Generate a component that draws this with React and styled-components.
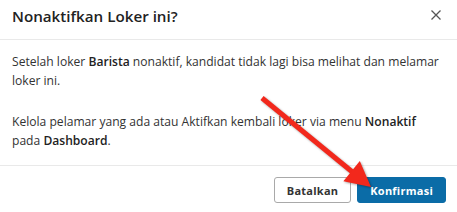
import React from "react";
import styled, { createGlobalStyle } from "styled-components";

const GlobalStyle = createGlobalStyle`
  html, body {
    margin: 0;
    padding: 0;
    background: #ffffff;
  }
  body {
    font-family: "Open Sans", "Noto Sans", Arial, sans-serif;
    color: #333333;
    -webkit-font-smoothing: antialiased;
  }
`;

const Dialog = styled.div`
  position: relative;
  width: 457px;
  background: #fff;
`;

const Header = styled.div`
  box-sizing: border-box;
  height: 40px;
  padding: 5px 12px 0 12px;
  display: flex;
  align-items: flex-start;
  justify-content: space-between;
  border-bottom: 1px solid #e9e9e9;
`;

const Title = styled.h4`
  margin: 0;
  font-size: 15.2px;
  line-height: 22px;
  font-weight: 600;
  color: #222;
`;

const Close = styled.button`
  border: 0;
  background: none;
  padding: 0;
  margin-right: 4px;
  height: 20px;
  display: flex;
  align-items: center;
  color: #555;
  cursor: pointer;
`;

const Body = styled.div`
  padding: 13px 14px 15px 12px;
  font-size: 12.1px;
  line-height: 18.57px;

  p {
    margin: 0;
  }
  p + p {
    margin-top: 23px;
  }
  b {
    font-weight: 600;
    color: #222;
  }
`;

const Footer = styled.div`
  border-top: 1px solid #e9e9e9;
  padding: 11px 11px 12px 12px;
  display: flex;
  justify-content: flex-end;
  gap: 6px;
`;

const Button = styled.button`
  box-sizing: border-box;
  height: 26px;
  padding: 0 12px;
  border-radius: 3px;
  font-family: "Open Sans", Arial, sans-serif;
  font-size: 11px;
  font-weight: 700;
  letter-spacing: 0.25px;
  cursor: pointer;
  border: 1px solid ${(p) => (p.$primary ? "#0b6ca7" : "#a9a9a9")};
  background: ${(p) => (p.$primary ? "#0b6ca7" : "#ffffff")};
  color: ${(p) => (p.$primary ? "#ffffff" : "#333333")};
`;

const Overlay = styled.svg`
  position: absolute;
  left: 0;
  top: 0;
  pointer-events: none;
  filter: drop-shadow(1px 1px 1px rgba(0, 0, 0, 0.35));
`;

function Arrow() {
  return (
    <Overlay width="457" height="212" viewBox="0 0 457 212">
      <line x1="262" y1="98" x2="353" y2="172.5" stroke="#f2281c" strokeWidth="5" />
      <polygon points="371,187 343.4,181.3 359.8,161.1" fill="#f2281c" />
    </Overlay>
  );
}

export default function App() {
  return (
    <>
      <GlobalStyle />
      <Dialog>
        <Header>
          <Title>Nonaktifkan Loker ini?</Title>
          <Close aria-label="close">
            <svg width="10" height="10" viewBox="0 0 10 10">
              <path d="M0.5 0.5 L9.5 9.5 M9.5 0.5 L0.5 9.5" stroke="currentColor" strokeWidth="1.3" />
            </svg>
          </Close>
        </Header>
        <Body>
          <p>
            Setelah loker <b>Barista</b> nonaktif, kandidat tidak lagi bisa melihat dan melamar loker ini.
          </p>
          <p>
            Kelola pelamar yang ada atau Aktifkan kembali loker via menu <b>Nonaktif</b> pada <b>Dashboard</b>.
          </p>
        </Body>
        <Footer>
          <Button>Batalkan</Button>
          <Button $primary>Konfirmasi</Button>
        </Footer>
        <Arrow />
      </Dialog>
    </>
  );
}
